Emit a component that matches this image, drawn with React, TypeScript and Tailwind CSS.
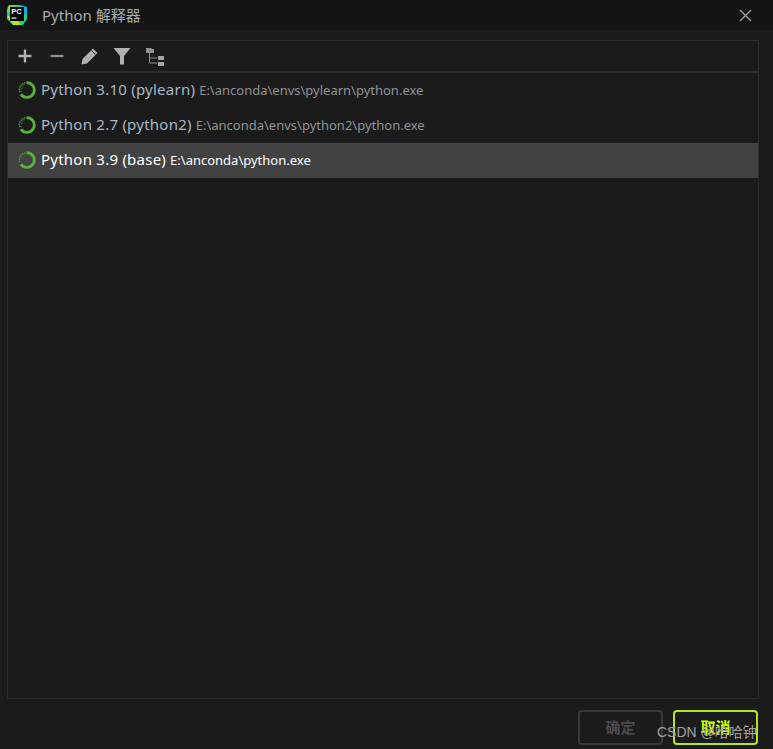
const font = { fontFamily: '"Noto Sans","Noto Sans CJK SC",sans-serif' };

function Ring() {
  const dots = [
    [1.7, 10.5],
    [1.4, 8.2],
    [2, 6],
    [3.2, 4.2],
    [4.8, 2.8],
    [6.8, 1.9],
    [3.6, 7.6],
    [4.4, 5.6],
    [3.4, 10.6],
    [5.9, 4],
  ];
  return (
    <svg width="18" height="18" viewBox="0 0 18 18" className="shrink-0 -translate-y-px">
      <path d="M8.5 1.6 A7.4 7.4 0 1 1 2.9 13.4" fill="none" stroke="#58b03f" strokeWidth="2.8" />
      {dots.map(([x, y], i) => (
        <rect key={i} x={x - 0.7} y={y - 0.7} width="1.4" height="1.4" fill={i > 5 ? "#2f6a25" : "#4f9e3a"} />
      ))}
    </svg>
  );
}

function Logo() {
  return (
    <svg width="22" height="22" viewBox="0 0 22 22" className="shrink-0">
      <path d="M3 1 L14 1 L21 5 L21 15 L17 21 L7 21 L1 15 L1 6 Z" fill="#1fcf8a" />
      <path d="M1 12 L7 21 L15 21 L9 12 Z" fill="#b5e61d" />
      <path d="M15 1 L21 3 L21 11 L17 9 Z" fill="#12a7e3" />
      <path d="M2 2 L11 1 L5 8 L1 8 Z" fill="#7fd650" />
      <rect x="4" y="3" width="14" height="14" fill="#000" />
      <text x="5.2" y="10" fontSize="7.5" fontWeight="700" fill="#fff" style={{ fontFamily: '"Liberation Sans",sans-serif' }}>PC</text>
      <rect x="5.5" y="13.5" width="5" height="1.2" fill="#fff" />
    </svg>
  );
}

function Plus() {
  return (
    <svg width="16" height="16" viewBox="0 0 16 16" className="shrink-0">
      <path d="M8 1.5v13M1.5 8h13" stroke="#afb1b3" strokeWidth="2.4" />
    </svg>
  );
}
function Minus() {
  return (
    <svg width="16" height="16" viewBox="0 0 16 16" className="shrink-0">
      <path d="M1.5 8h13" stroke="#8f9193" strokeWidth="2.2" />
    </svg>
  );
}
function Pencil() {
  return (
    <svg width="18" height="18" viewBox="0 0 18 18" className="shrink-0">
      <path d="M0.5 17.5 L1.5 12 L12 1.5 L16.5 6 L6 16.5 Z" fill="#afb1b3" />
      <path d="M10.5 3.5 L14.5 7.5" stroke="#1b1b1b" strokeWidth="1" />
    </svg>
  );
}
function Filter() {
  return (
    <svg width="18" height="18" viewBox="0 0 18 18" className="shrink-0">
      <path d="M0.5 1 H17.5 L11 9 V17.5 H7 V9 Z" fill="#afb1b3" />
    </svg>
  );
}
function Tree() {
  return (
    <svg width="20" height="20" viewBox="0 0 20 20" className="shrink-0">
      <path d="M1 1 H6 L7 2 H9 V6 H1 Z" fill="#8f9193" />
      <path d="M4.5 6 V16 H12 M4.5 11 H12" fill="none" stroke="#8f9193" strokeWidth="1" />
      <rect x="13" y="9" width="6" height="4" fill="#a5a7a9" />
      <rect x="13" y="15" width="6" height="4" fill="#a5a7a9" />
    </svg>
  );
}

const rows = [
  { name: "Python 3.10 (pylearn)", path: "E:\\anconda\\envs\\pylearn\\python.exe", sel: false },
  { name: "Python 2.7 (python2)", path: "E:\\anconda\\envs\\python2\\python.exe", sel: false },
  { name: "Python 3.9 (base)", path: "E:\\anconda\\python.exe", sel: true },
];

export default function App() {
  return (
    <div className="relative w-[773px] h-[749px] bg-[#1b1b1b] flex flex-col overflow-hidden" style={font}>
      <div className="h-[30px] bg-[#141414] flex items-center shrink-0 pl-[6px] pr-[21px]">
        <Logo />
        <span className="ml-[14px] text-[15px] text-[#a9adb1] leading-none">Python 解释器</span>
        <svg width="13" height="13" viewBox="0 0 13 13" className="ml-auto">
          <path d="M1 1 L12 12 M12 1 L1 12" stroke="#a8a8a8" strokeWidth="1.2" />
        </svg>
      </div>
      <div className="mt-[10px] ml-[7px] w-[752px] h-[659px] border border-[#2c2c2c] flex flex-col">
        <div className="h-[32px] border-b-2 border-[#2c2c2c] flex items-center pl-[9px] shrink-0">
          <Plus />
          <span className="ml-[16px]"><Minus /></span>
          <span className="ml-[16px]"><Pencil /></span>
          <span className="ml-[14px]"><Filter /></span>
          <span className="ml-[14px] mt-[2px]"><Tree /></span>
        </div>
        <div className="flex flex-col">
          {rows.map((r) => (
            <div key={r.name} className={`h-[35px] flex items-center pl-[10px] ${r.sel ? "bg-[#424242]" : ""}`}>
              <Ring />
              <span className={`ml-[5px] text-[15px] leading-[20px] -translate-y-[2px] whitespace-nowrap tracking-[0.24px] ${r.sel ? "text-[#ffffff]" : "text-[#a9b7c6]"}`}>{r.name}</span>
              <span className={`ml-[4px] text-[13px] leading-[20px] -translate-y-px whitespace-nowrap ${r.sel ? "text-[#ffffff]" : "text-[#8f9296]"}`}>{r.path}</span>
            </div>
          ))}
        </div>
      </div>
      <div className="flex justify-end gap-[10px] pr-[15px] mt-[11px]">
        <div className="w-[85px] h-[35px] rounded-[4px] border-2 border-[#3a3a3a] flex items-center justify-center text-[15px] font-bold text-[#4a4a4a]">确定</div>
        <div className="w-[85px] h-[35px] rounded-[4px] border-2 border-[#b5e61d] flex items-center justify-center text-[15px] font-bold text-[#c6ff00]">取消</div>
      </div>
      <span className="absolute left-[657px] top-[723px] text-[14px] leading-[18px] text-[#a3a3a3] whitespace-nowrap" style={{ fontFamily: '"Liberation Sans","Noto Sans CJK SC",sans-serif' }}>CSDN @哈哈钟</span>
    </div>
  );
}
